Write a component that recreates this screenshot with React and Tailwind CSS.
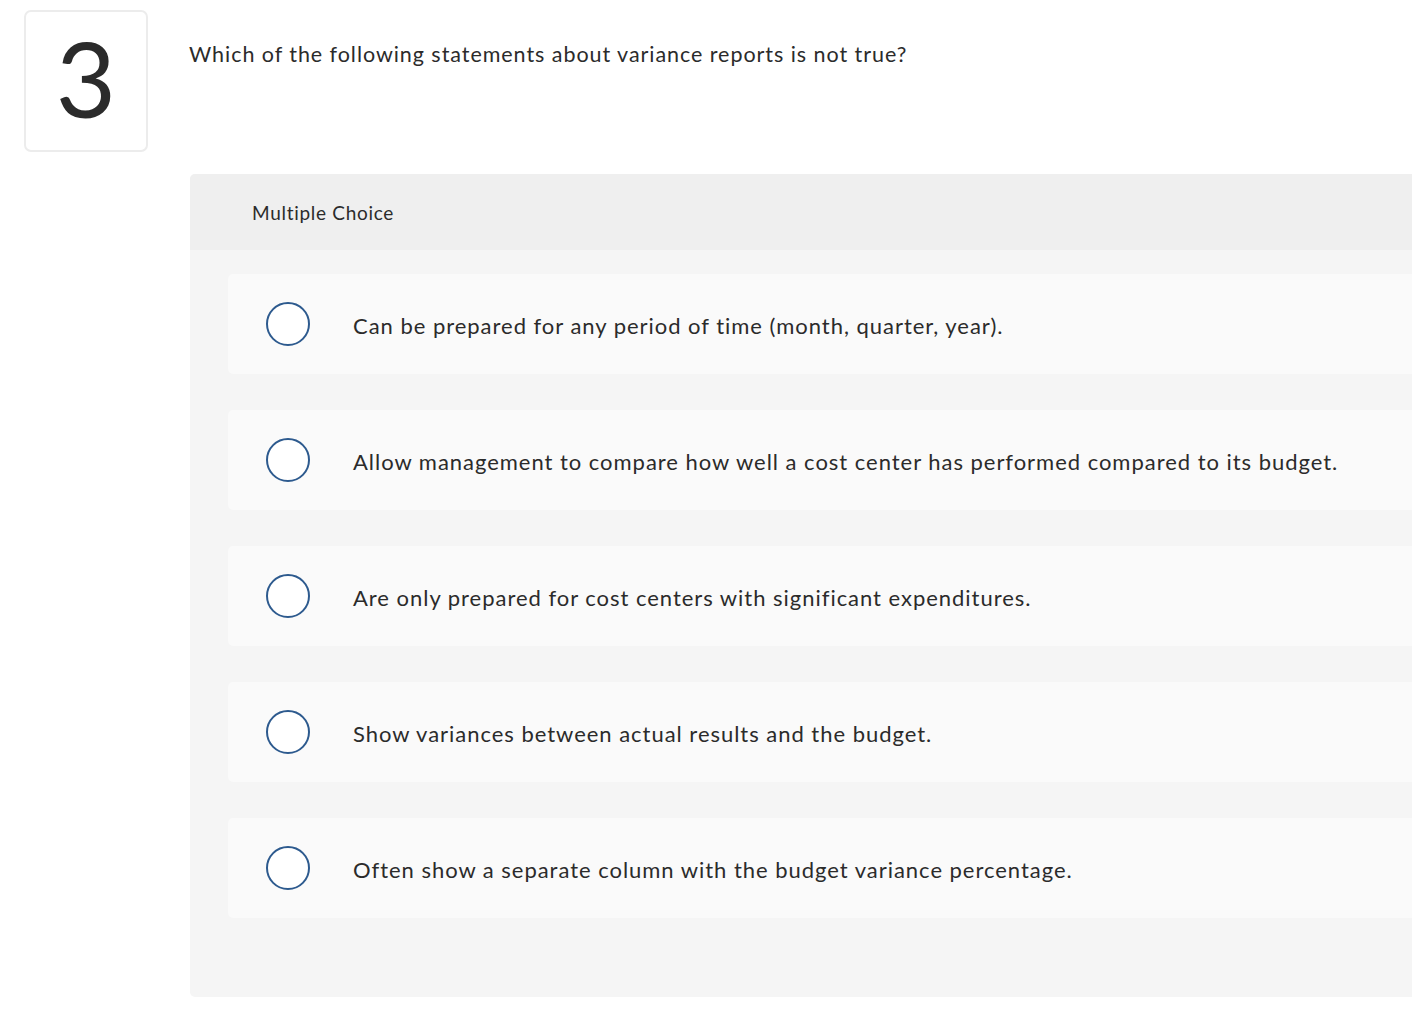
import React from "react";

const options = [
  "Can be prepared for any period of time (month, quarter, year).",
  "Allow management to compare how well a cost center has performed compared to its budget.",
  "Are only prepared for cost centers with significant expenditures.",
  "Show variances between actual results and the budget.",
  "Often show a separate column with the budget variance percentage.",
];

export default function App() {
  return (
    <div
      className="w-[1412px] h-[1010px] bg-white overflow-hidden text-[#2b2b2b]"
      style={{ fontFamily: "Lato, 'Open Sans', sans-serif" }}
    >
      <div className="flex pt-[10px] pl-[24px]">
        <div className="w-[124px] h-[142px] shrink-0 border-2 border-[#ececec] rounded-[7px] flex items-center justify-center">
          <span className="text-[104px] leading-none font-normal text-[#2b2b2b] -mt-[6px]">3</span>
        </div>
        <div className="pl-[41px] pt-[29px] text-[21.5px] leading-[30px] tracking-[0.95px]">
          Which of the following statements about variance reports is not true?
        </div>
      </div>
      <div className="ml-[190px] mt-[22px] w-[1222px] h-[823px] bg-[#f5f5f5] rounded-tl-[5px] rounded-bl-[5px] overflow-hidden">
        <div className="h-[76px] bg-[#efefef] flex items-center pl-[62px] text-[19px] tracking-[0.7px] pt-[2px]">
          Multiple Choice
        </div>
        <div className="pl-[38px] pt-[24px] flex flex-col gap-[36px]">
          {options.map((o) => (
            <div
              key={o}
              className="h-[100px] bg-[#fafafa] rounded-l-[5px] flex items-center"
            >
              <div className="ml-[38px] w-[44px] h-[44px] rounded-full border-2 border-[#2d5a8e] bg-white shrink-0" />
              <div className="ml-[43px] text-[22px] tracking-[0.97px] pt-[2px]">{o}</div>
            </div>
          ))}
        </div>
      </div>
    </div>
  );
}
